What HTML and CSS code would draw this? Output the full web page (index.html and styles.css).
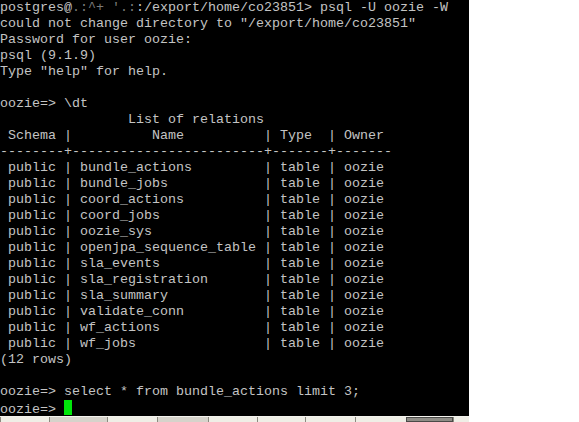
FILE: index.html
```html
<!DOCTYPE html>
<html>
<head>
<meta charset="utf-8">
<link rel="stylesheet" href="styles.css">
</head>
<body>
<div class="screen">
<div class="terminal">
<div class="line"><span>postgres@</span><span class="blur">.:^+ '.:</span><span>:/export/home/co23851&gt; psql -U oozie -W</span></div>
<div class="line">could not change directory to "/export/home/co23851"</div>
<div class="line">Password for user oozie:</div>
<div class="line">psql (9.1.9)</div>
<div class="line">Type "help" for help.</div>
<div class="line"> </div>
<div class="line">oozie=&gt; \dt</div>
<div class="line">                List of relations</div>
<div class="line"> Schema |          Name          | Type  | Owner</div>
<div class="line">--------+------------------------+-------+-------</div>
<div class="line"> public | bundle_actions         | table | oozie</div>
<div class="line"> public | bundle_jobs            | table | oozie</div>
<div class="line"> public | coord_actions          | table | oozie</div>
<div class="line"> public | coord_jobs             | table | oozie</div>
<div class="line"> public | oozie_sys              | table | oozie</div>
<div class="line"> public | openjpa_sequence_table | table | oozie</div>
<div class="line"> public | sla_events             | table | oozie</div>
<div class="line"> public | sla_registration       | table | oozie</div>
<div class="line"> public | sla_summary            | table | oozie</div>
<div class="line"> public | validate_conn          | table | oozie</div>
<div class="line"> public | wf_actions             | table | oozie</div>
<div class="line"> public | wf_jobs                | table | oozie</div>
<div class="line">(12 rows)</div>
<div class="line"> </div>
<div class="line">oozie=&gt; select * from bundle_actions limit 3;</div>
<div class="line"><span>oozie=&gt; </span><span class="cursor"></span></div>
</div>
<div class="taskbar">
  <div class="seg light" style="width:49px"></div>
  <div class="seg gray" style="width:58px"></div>
  <div class="seg light" style="width:50px"></div>
  <div class="seg gray" style="width:51px"></div>
  <div class="seg light" style="width:49px"></div>
  <div class="seg light" style="width:48px"></div>
  <div class="seg light" style="width:50px"></div>
  <div class="seg light" style="width:51px"></div>
  <div class="seg dark" style="width:47px"></div>
  <div class="seg light" style="width:16px"></div>
</div>
</div>
</body>
</html>
```
FILE: styles.css
```css
html, body {
  margin: 0;
  padding: 0;
  background: #ffffff;
}
.screen {
  display: flex;
  flex-direction: column;
  width: 579px;
  height: 422px;
  overflow: hidden;
}
.terminal {
  width: 469px;
  height: 416px;
  background: #000000;
  overflow: hidden;
  flex: none;
  font-family: "Liberation Mono", "Courier New", monospace;
  font-size: 13.333px;
  line-height: 16px;
  color: #c4c4c4;
}
.line {
  height: 16px;
  white-space: pre;
}
.blur {
  color: #7a7a7a;
}
.cursor {
  display: inline-block;
  width: 8px;
  height: 15px;
  background: #00e60a;
  vertical-align: -2px;
}
.taskbar {
  display: flex;
  height: 5px;
  border-top: 1px solid #f4f3ee;
  flex: none;
  width: 469px;
}
.seg {
  height: 5px;
  box-sizing: border-box;
  border-left: 1px solid #8c8a80;
}
.seg.light {
  background: #efeee6;
}
.seg.gray {
  background: #d6d3cb;
}
.seg.dark {
  background: #8e8c86;
  border: 1px solid #4a4a48;
}
```
